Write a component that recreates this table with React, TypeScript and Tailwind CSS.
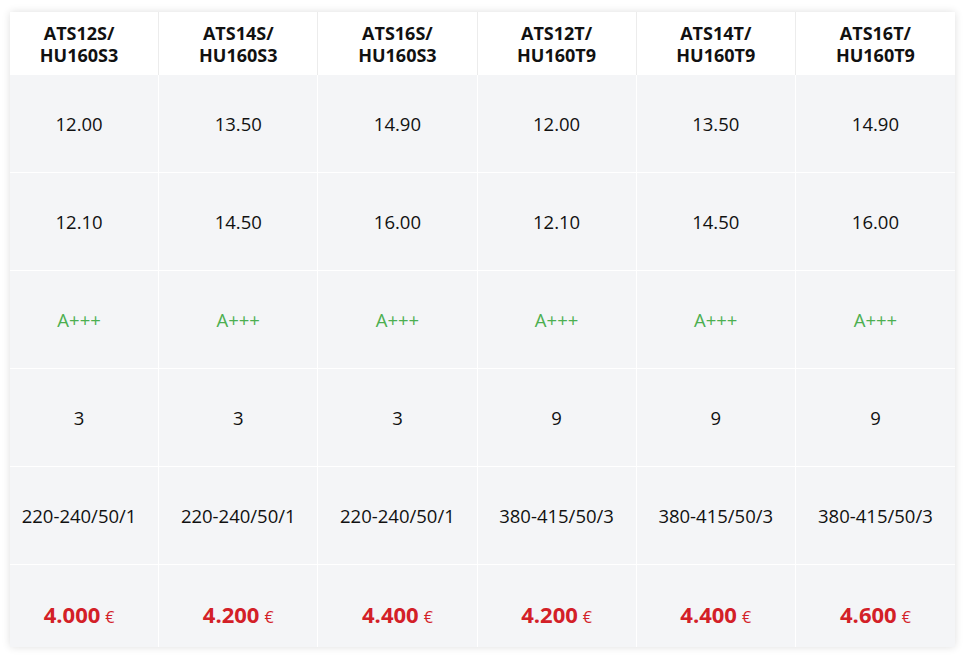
import React from "react";

const headers = [
  ["ATS12S/", "HU160S3"],
  ["ATS14S/", "HU160S3"],
  ["ATS16S/", "HU160S3"],
  ["ATS12T/", "HU160T9"],
  ["ATS14T/", "HU160T9"],
  ["ATS16T/", "HU160T9"],
];

const rows: string[][] = [
  ["12.00", "13.50", "14.90", "12.00", "13.50", "14.90"],
  ["12.10", "14.50", "16.00", "12.10", "14.50", "16.00"],
  ["A+++", "A+++", "A+++", "A+++", "A+++", "A+++"],
  ["3", "3", "3", "9", "9", "9"],
  ["220-240/50/1", "220-240/50/1", "220-240/50/1", "380-415/50/3", "380-415/50/3", "380-415/50/3"],
];

const prices = ["4.000", "4.200", "4.400", "4.200", "4.400", "4.600"];

export default function App() {
  return (
    <div
      className="w-[976px] h-[661px] bg-white pt-[12px] pl-[10px] pr-[21px]"
      style={{ fontFamily: '"Open Sans", "Noto Sans", sans-serif' }}
    >
      <div className="h-[635px] overflow-hidden shadow-[0_0_8px_rgba(0,0,0,0.13)]">
        <div className="grid grid-cols-6 w-[955px] -ml-[10px]">
          {headers.map((h, i) => (
            <div
              key={i}
              className={`h-[63px] bg-white flex flex-col items-center justify-center text-center font-bold text-[18px] leading-[22px] text-[#111] ${
                i < 5 ? "border-r border-[#ececec]" : ""
              }`}
            >
              <span>{h[0]}</span>
              <span>{h[1]}</span>
            </div>
          ))}
          {rows.map((r, ri) =>
            r.map((v, ci) => (
              <div
                key={`${ri}-${ci}`}
                className={`h-[98px] bg-[#f4f5f7] flex items-center justify-center text-[18.5px] ${
                  ri === 2 ? "text-[#4caf50]" : "text-[#111]"
                } ${ci < 5 ? "border-r border-white" : ""} border-b border-white`}
              >
                {v}
              </div>
            ))
          )}
          {prices.map((p, ci) => (
            <div
              key={`p-${ci}`}
              className={`h-[98px] bg-[#f4f5f7] flex items-center justify-center ${
                ci < 5 ? "border-r border-white" : ""
              }`}
            >
              <div className="flex items-baseline text-[#d32027]">
                <span className="font-bold text-[22px]">{p}</span>
                <span className="text-[16px] ml-[5px]">€</span>
              </div>
            </div>
          ))}
        </div>
      </div>
    </div>
  );
}
